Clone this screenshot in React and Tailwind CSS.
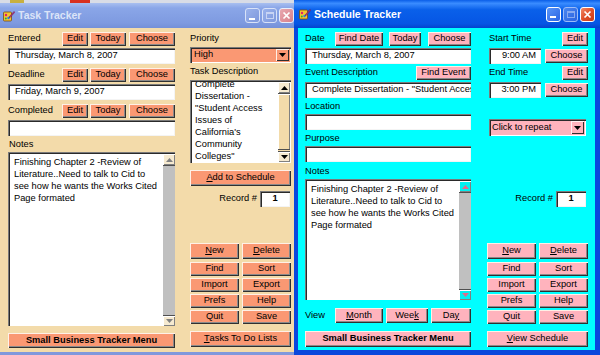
import React from 'react';
import clsx from 'clsx';

const FONT = "font-['Liberation_Sans',Arial,sans-serif]";

function Btn({ children, className = '', pink, bold }) {
  return (
    <div
      className={clsx(
        'flex items-center justify-center text-[9.3px] leading-none text-black whitespace-nowrap shadow-[inset_1px_1px_0_#fff0e6,inset_-1px_-1px_0_#303030,inset_-2px_-2px_0_#8a8a8a]',
        pink ? 'bg-[#ffb3bd]' : 'bg-[#fa9873]',
        bold && 'font-bold',
        className
      )}
    >
      {children}
    </div>
  );
}

function Field({ children, className = '' }) {
  return (
    <div
      className={clsx(
        'flex items-center bg-white text-[9.3px] leading-none text-black whitespace-nowrap overflow-hidden shadow-[inset_1px_1px_0_#7a7a7a,inset_2px_2px_0_#2a2a2a,inset_-1px_-1px_0_#f4f4f4]',
        className
      )}
    >
      {children}
    </div>
  );
}

function Label({ children, className = '' }) {
  return <div className={clsx('flex items-center text-[9.3px] leading-none text-black whitespace-nowrap', className)}>{children}</div>;
}

function Tri({ down = true, color = '#000' }) {
  return (
    <svg width="7" height="4" viewBox="0 0 7 4">
      <path d={down ? 'M0 0h7L3.5 4z' : 'M0 4h7L3.5 0z'} fill={color} />
    </svg>
  );
}

function AppIcon() {
  return (
    <svg width="12" height="12" viewBox="0 0 12 12">
      <rect x="0.5" y="2" width="8" height="9" rx="1" fill="#f4c431" stroke="#7a4c10" strokeWidth="0.8" />
      <circle cx="3" cy="5" r="1.2" fill="#e0206a" />
      <circle cx="5.5" cy="8" r="1.2" fill="#2a7ae0" />
      <circle cx="2.8" cy="8.6" r="1" fill="#20b040" />
      <path d="M6 7 L11 1.5 L11.8 2.3 L6.8 7.8z" fill="#c03a8a" stroke="#5a1040" strokeWidth="0.5" />
    </svg>
  );
}

function CapBtn({ kind, active }) {
  const base = 'w-[15px] h-[15px] rounded-[3px] flex items-center justify-center border';
  if (kind === 'close') {
    return (
      <div
        className={clsx(
          base,
          active
            ? 'border-white bg-[linear-gradient(135deg,#f08a6a,#e0502a_50%,#c83a18)]'
            : 'border-[#e8eefc] bg-[linear-gradient(135deg,#e8a8b0,#d8808a)]'
        )}
      >
        <svg width="9" height="9" viewBox="0 0 9 9">
          <path d="M1.5 1.5 L7.5 7.5 M7.5 1.5 L1.5 7.5" stroke="#fff" strokeWidth="1.7" />
        </svg>
      </div>
    );
  }
  const dim = kind === 'max';
  return (
    <div
      className={clsx(
        base,
        active
          ? dim
            ? 'border-[#9cbcf8] bg-[linear-gradient(135deg,#4a86f0,#2a62e0)]'
            : 'border-white bg-[linear-gradient(135deg,#5a96f8,#2a64e4)]'
          : 'border-[#d8e2f8] bg-[linear-gradient(135deg,#9ab2ec,#7e98dc)]'
      )}
    >
      {kind === 'min' ? (
        <div className={clsx('w-[6px] h-[2px] mt-[6px] -ml-[2px]', dim ? 'bg-[#9cbcf8]' : 'bg-white')} />
      ) : (
        <div className={clsx('w-[8px] h-[7px] border border-t-2', active ? 'border-[#88aaf0]' : 'border-[#c8d4f4]')} />
      )}
    </div>
  );
}

function TitleBar({ title, active, className = '' }) {
  return (
    <div
      className={clsx(
        'flex items-center shrink-0',
        active
          ? 'bg-[linear-gradient(to_bottom,#0a5ee8,#3a8cff_12%,#0a60ea_35%,#0656e4_85%,#0444cc)]'
          : 'bg-[linear-gradient(to_bottom,#a8bff0,#8aa6e8_20%,#7e9ae0_80%,#7490d8)]',
        className
      )}
    >
      <div className="ml-[3px] mr-[3px]">
        <AppIcon />
      </div>
      <div className={clsx('text-[10.5px] font-bold leading-none whitespace-nowrap', active ? 'text-white' : 'text-[#dbe4f8]')}>
        {title}
      </div>
      <div className="flex-1" />
      <div className="flex gap-[2px] items-center">
        <CapBtn kind="min" active={active} />
        <CapBtn kind="max" active={active} />
        <CapBtn kind="close" active={active} />
      </div>
    </div>
  );
}

function Scroll({ btn, track, arrow = '#000', thumb }) {
  return (
    <div className="w-[12px] flex flex-col shrink-0">
      <div className={clsx('h-[11px] flex items-center justify-center shadow-[inset_1px_1px_0_#fff,inset_-1px_-1px_0_#808080]', btn)}>
        <Tri down={false} color={arrow} />
      </div>
      <div className={clsx('flex-1 border-t border-[#505050]', track)}>
        {thumb && <div className="h-[56px] border-b border-[#505050] shadow-[inset_1px_1px_0_#fff,inset_-1px_0_0_#808080]" />}
      </div>
      <div className={clsx('h-[11px] flex items-center justify-center border-t border-[#505050] shadow-[inset_1px_1px_0_#fff,inset_-1px_-1px_0_#808080]', btn)}>
        <Tri color={arrow} />
      </div>
    </div>
  );
}

function NotesBox({ className, btn, arrow }) {
  return (
    <div className={clsx('flex bg-white p-[2px] pr-0 pb-0 shadow-[inset_1px_1px_0_#7a7a7a,inset_2px_2px_0_#2a2a2a]', className)}>
      <div className="flex-1 pl-[4px] pr-[4px] pt-[2px] text-[9.3px] leading-[12px] text-black">
        Finishing Chapter 2 -Review of Literature..Need to talk to Cid to see how he wants the Works Cited Page formated
      </div>
      <Scroll btn={btn} track="bg-[#c0c0c0]" arrow={arrow} />
    </div>
  );
}

function ButtonGrid({ pink }) {
  const rows = [
    ['Find', 'Sort'],
    ['Import', 'Export'],
    ['Prefs', 'Help'],
    ['Quit', 'Save'],
  ];
  return (
    <div className="flex flex-col gap-[2px]">
      <div className="flex gap-[3px] mb-[1px]">
        <Btn pink={pink} className="w-[49px] h-[16px]">
          <span className="underline">N</span>ew
        </Btn>
        <Btn pink={pink} className="w-[49px] h-[16px]">
          <span className="underline">D</span>elete
        </Btn>
      </div>
      {rows.map(([a, b]) => (
        <div key={a} className="flex gap-[3px]">
          <Btn pink={pink} className="w-[49px] h-[14px]">{a}</Btn>
          <Btn pink={pink} className="w-[49px] h-[14px]">{b}</Btn>
        </div>
      ))}
    </div>
  );
}

function DateRow({ label }) {
  return (
    <div className="flex h-[14px] items-center">
      <Label className="flex-1">{label}</Label>
      <Btn className="w-[26px] h-[14px]">Edit</Btn>
      <Btn className="w-[36px] h-[14px] ml-[2px]">Today</Btn>
      <Btn className="w-[46px] h-[14px] ml-[3px]">Choose</Btn>
    </div>
  );
}

function TaskTracker() {
  return (
    <div className="w-[294px] shrink-0 flex flex-col mt-[3px] h-[352px] bg-[#f3dbaa] border-b-[3px] border-[#8098dc]">
      <TitleBar title="Task Tracker" className="h-[25px] pr-0" />
      <div className="flex pl-[8px] pt-[4px]">
        <div className="w-[167px] flex flex-col">
          <DateRow label="Entered" />
          <Field className="h-[16px] mt-[2px] pl-[7px]">Thursday, March 8, 2007</Field>
          <div className="mt-[4px]">
            <DateRow label="Deadline" />
          </div>
          <Field className="h-[16px] mt-[2px] pl-[7px]">Friday, March 9, 2007</Field>
          <div className="mt-[4px]">
            <DateRow label="Completed" />
          </div>
          <Field className="h-[16px] mt-[2px]" />
          <Label className="h-[13px] mt-[2px] pl-[1px]">Notes</Label>
          <NotesBox className="h-[174px] mt-[1px]" btn="bg-[#f6ead0]" arrow="#808080" />
          <Btn bold className="h-[15px] mt-[7px]">Small Business Tracker Menu</Btn>
        </div>
        <div className="w-[101px] ml-[15px] flex flex-col">
          <Label className="h-[14px]">Priority</Label>
          <div className="h-[16px] mt-[1px] flex bg-[#fa9873] p-[2px] shadow-[inset_1px_1px_0_#7a7a7a,inset_2px_2px_0_#2a2a2a,inset_-1px_-1px_0_#fff]">
            <div className="flex-1 flex items-center pl-[2px] text-[9.3px] leading-none text-black">High</div>
            <div className="w-[13px] flex items-center justify-center shadow-[inset_1px_1px_0_#fff0e6,inset_-1px_-1px_0_#303030]">
              <Tri />
            </div>
          </div>
          <Label className="h-[12px] mt-[3px]">Task Description</Label>
          <div className="h-[83px] mt-[2px] flex bg-white p-[2px] pr-[1px] pb-[1px] shadow-[inset_1px_1px_0_#7a7a7a,inset_2px_2px_0_#2a2a2a]">
            <div className="flex-1 overflow-hidden pl-[3px]">
              <div className="-mt-[4px] text-[9.3px] leading-[12px] text-black">
                Complete
                <br />
                Dissertation -
                <br />
                "Student Access
                <br />
                Issues of
                <br />
                California's
                <br />
                Community
                <br />
                Colleges"
              </div>
            </div>
            <Scroll btn="bg-[#f6ead0]" track="bg-[#f3dbaa]" thumb />
          </div>
          <Btn className="h-[16px] mt-[7px]">
            <span className="underline">A</span>dd to Schedule
          </Btn>
          <div className="h-[16px] mt-[5px] flex items-center justify-end pr-[1px]">
            <Label className="mr-[3px]">Record #</Label>
            <Field className="w-[30px] h-[16px] justify-center font-bold">1</Field>
          </div>
          <div className="mt-[36px]">
            <ButtonGrid />
          </div>
          <Btn className="h-[16px] mt-[7px]">
            <span className="underline">T</span>asks To Do Lists
          </Btn>
        </div>
      </div>
    </div>
  );
}

function TimeRow({ value }) {
  return (
    <div className="flex items-center mt-[2px] h-[16px]">
      <Field className="w-[52px] h-[16px] ml-[2px] justify-end pr-[5px]">{value}</Field>
      <div className="flex-1" />
      <Btn pink className="w-[43px] h-[14px]">Choose</Btn>
    </div>
  );
}

function ScheduleTracker() {
  return (
    <div className="flex-1 flex flex-col h-[355px] bg-[#0a48dc]">
      <TitleBar active title="Schedule Tracker" className="h-[28px] pl-[2px] pr-[5px]" />
      <div className="flex-1 flex ml-[4px] mr-[5px] mb-[5px] bg-[#00ffff] pl-[7px] pt-[4px]">
        <div className="w-[166px] flex flex-col">
          <div className="flex h-[14px] items-center">
            <Label className="flex-1">Date</Label>
            <Btn pink className="w-[48px] h-[14px]">Find Date</Btn>
            <Btn pink className="w-[32px] h-[14px] ml-[6px]">Today</Btn>
            <Btn pink className="w-[43px] h-[14px] ml-[7px]">Choose</Btn>
          </div>
          <Field className="h-[16px] mt-[2px] pl-[7px]">Thursday, March 8, 2007</Field>
          <div className="flex h-[14px] mt-[2px] items-center">
            <Label className="flex-1">Event Description</Label>
            <Btn pink className="w-[55px] h-[14px]">Find Event</Btn>
          </div>
          <Field className="h-[16px] mt-[2px] pl-[7px]">Complete Dissertation - "Student Access Issues of California's Community Colleges"</Field>
          <Label className="h-[14px] mt-[2px]">Location</Label>
          <Field className="h-[16px]" />
          <Label className="h-[14px] mt-[2px]">Purpose</Label>
          <Field className="h-[16px]" />
          <Label className="h-[14px] mt-[3px]">Notes</Label>
          <NotesBox className="h-[121px]" btn="bg-[#00f0f0]" arrow="#e06a8a" />
          <div className="flex h-[15px] mt-[8px] items-center">
            <Label className="w-[30px] text-[#3a6a6a]">View</Label>
            <Btn pink className="w-[48px] h-[15px]">
              <span className="underline">M</span>onth
            </Btn>
            <Btn pink className="w-[42px] h-[15px] ml-[3px]">
              Wee<span className="underline">k</span>
            </Btn>
            <Btn pink className="w-[40px] h-[15px] ml-[3px]">
              Da<span className="underline">y</span>
            </Btn>
          </div>
          <Btn pink bold className="h-[16px] mt-[8px]">Small Business Tracker Menu</Btn>
        </div>
        <div className="w-[101px] ml-[16px] flex flex-col">
          <div className="flex h-[14px] items-center">
            <Label className="flex-1 pl-[2px]">Start Time</Label>
            <Btn pink className="w-[26px] h-[14px]">Edit</Btn>
          </div>
          <TimeRow value="9:00 AM" />
          <div className="flex h-[14px] mt-[2px] items-center">
            <Label className="flex-1 pl-[2px]">End Time</Label>
            <Btn pink className="w-[26px] h-[14px]">Edit</Btn>
          </div>
          <TimeRow value="3:00 PM" />
          <div className="h-[17px] w-[97px] ml-[2px] mt-[21px] flex bg-[#ffb3bd] p-[2px] shadow-[inset_1px_1px_0_#7a7a7a,inset_2px_2px_0_#2a2a2a,inset_-1px_-1px_0_#fff]">
            <div className="flex-1 flex items-center pl-[1px] text-[9.3px] leading-none text-black whitespace-nowrap">Click to repeat</div>
            <div className="w-[13px] flex items-center justify-center shadow-[inset_1px_1px_0_#fff0f2,inset_-1px_-1px_0_#303030]">
              <Tri />
            </div>
          </div>
          <div className="h-[16px] mt-[55px] flex items-center justify-end pr-[2px]">
            <Label className="mr-[3px]">Record #</Label>
            <Field className="w-[30px] h-[16px] justify-center font-bold">1</Field>
          </div>
          <div className="mt-[36px]">
            <ButtonGrid pink />
          </div>
          <Btn pink className="h-[16px] mt-[7px]">
            <span className="underline">V</span>iew Schedule
          </Btn>
        </div>
      </div>
    </div>
  );
}

export default function App() {
  return (
    <div className={clsx('w-[600px] h-[355px] overflow-hidden flex relative bg-[#d8dce6]', FONT)}>
      <div className="absolute left-[10px] top-0 w-[14px] h-[3px] bg-[#c8b040]" />
      <div className="absolute left-[70px] top-0 w-[20px] h-[3px] bg-[#d83020]" />
      <TaskTracker />
      <ScheduleTracker />
    </div>
  );
}
